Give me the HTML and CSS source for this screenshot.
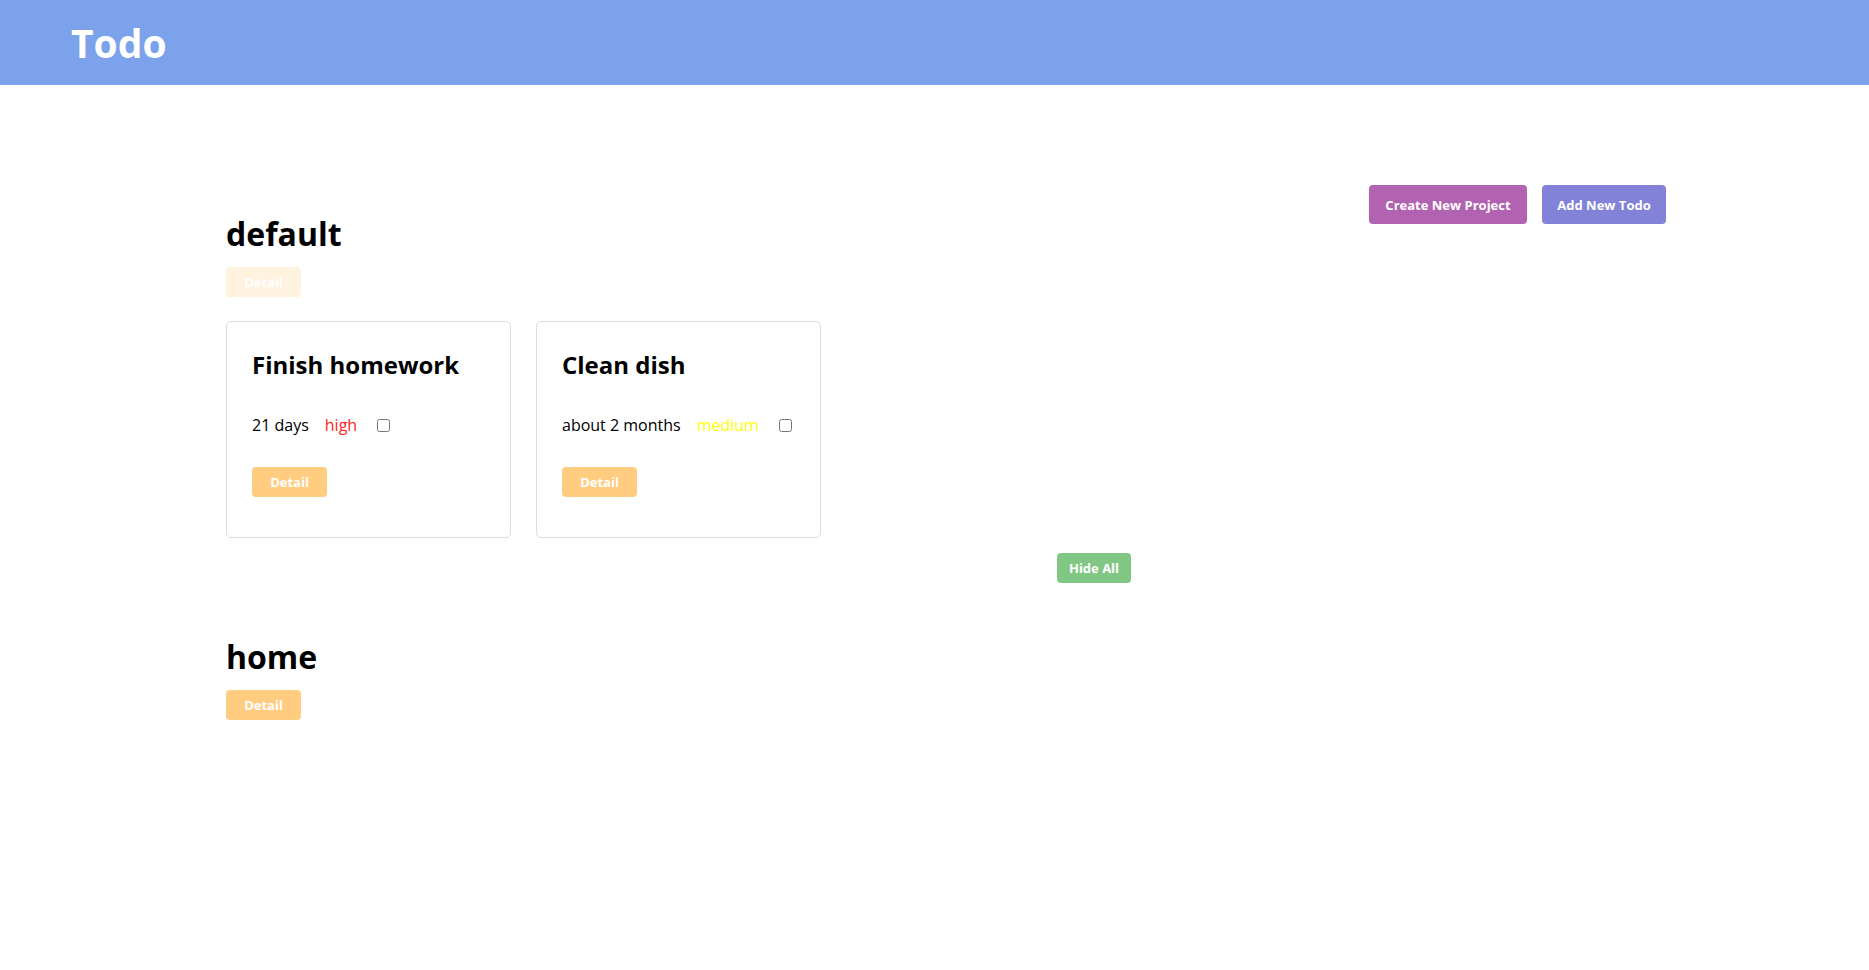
FILE: index.html
```html
<!DOCTYPE html>
<html lang="en">
<head>
<meta charset="utf-8">
<title>Todo</title>
<link rel="stylesheet" href="styles.css">
</head>
<body>
<header class="topbar">
  <h1 class="brand">Todo</h1>
</header>
<main class="content">
  <div class="actions">
    <button class="btn btn-project">Create New Project</button>
    <button class="btn btn-todo">Add New Todo</button>
  </div>
  <section class="project">
    <h2 class="project-title">default</h2>
    <button class="btn btn-detail btn-faded">Detail</button>
    <div class="cards">
      <article class="card">
        <h3 class="card-title">Finish homework</h3>
        <div class="card-row">
          <span class="due">21 days</span>
          <span class="prio prio-high">high</span>
          <input type="checkbox" class="check">
        </div>
        <button class="btn btn-detail">Detail</button>
      </article>
      <article class="card">
        <h3 class="card-title">Clean dish</h3>
        <div class="card-row">
          <span class="due">about 2 months</span>
          <span class="prio prio-medium">medium</span>
          <input type="checkbox" class="check">
        </div>
        <button class="btn btn-detail">Detail</button>
      </article>
    </div>
    <div class="hide-row">
      <button class="btn btn-hide">Hide All</button>
    </div>
  </section>
  <section class="project project-second">
    <h2 class="project-title">home</h2>
    <button class="btn btn-detail">Detail</button>
  </section>
</main>
</body>
</html>
```
FILE: styles.css
```css
* { box-sizing: border-box; }
html, body { margin: 0; padding: 0; }
body {
  font-family: "Open Sans", "Noto Sans", sans-serif;
  color: #000;
  background: #fff;
}
.topbar {
  height: 85px;
  background: #7ba2eb;
  padding-left: 71px;
  display: flex;
  align-items: flex-start;
}
.brand {
  margin: 0;
  padding-top: 17px;
  font-size: 39px;
  line-height: 52px;
  font-weight: 700;
  color: #fff;
}
.content {
  padding: 100px 203px 0 226px;
}
.actions {
  float: right;
  display: flex;
  gap: 15px;
}
.btn {
  font-family: "Open Sans", "Noto Sans", sans-serif;
  font-weight: 700;
  font-size: 13px;
  color: #fff;
  border: none;
  border-radius: 4px;
  cursor: pointer;
  padding: 0;
}
.btn-project {
  background: #b162b1;
  height: 39px;
  width: 158px;
}
.btn-todo {
  background: #8283d8;
  height: 39px;
  width: 124px;
}
.project {
  padding-top: 27px;
}
.project-title {
  margin: 0 0 11px;
  font-size: 32px;
  line-height: 44px;
  font-weight: 700;
}
.btn-detail {
  background: #ffcc80;
  width: 75px;
  height: 30px;
  display: block;
}
.btn-faded {
  opacity: 0.25;
}
.cards {
  display: flex;
  gap: 25px;
  margin-top: 24px;
}
.card {
  width: 285px;
  height: 217px;
  border: 1px solid #dcdcdc;
  border-radius: 5px;
  padding: 26px 25px 0 25px;
}
.card-title {
  margin: 0;
  font-size: 24px;
  line-height: 33px;
  font-weight: 700;
}
.card-row {
  display: flex;
  align-items: center;
  gap: 16px;
  margin-top: 33px;
  height: 22px;
  font-size: 16px;
  line-height: 22px;
}
.card-row .check {
  margin: 0 0 0 4px;
  width: 13px;
  height: 13px;
}
.prio-high { color: #ff2222; }
.prio-medium { color: #ffff00; }
.card .btn-detail {
  margin-top: 31px;
}
.hide-row {
  margin-top: 15px;
  padding-left: 831px;
}
.btn-hide {
  background: #81c784;
  width: 74px;
  height: 30px;
  display: block;
}
.project-second {
  padding-top: 52px;
}
```
